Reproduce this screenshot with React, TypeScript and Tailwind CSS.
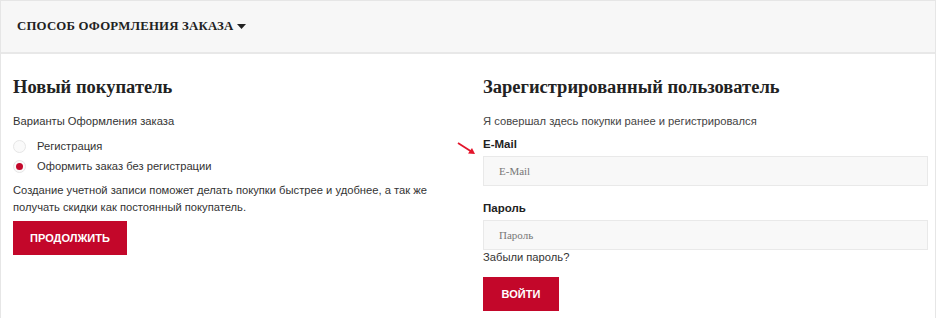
import React from 'react';

const serif = { fontFamily: '"Liberation Serif", "DejaVu Serif", serif' };

// Радио-кнопка
function Radio({ checked, label }: { checked?: boolean; label: string }) {
  return (
    <label className="flex items-center h-[20px] text-[11.2px] text-[#333]">
      <span className="w-[13px] h-[13px] rounded-full border border-[#e6e6e6] bg-[#fafafa] flex items-center justify-center">
        {checked && <span className="w-[7px] h-[7px] rounded-full bg-[#c3072a]" />}
      </span>
      <span className="ml-[11px]">{label}</span>
    </label>
  );
}

function Field({ label, placeholder }: { label: string; placeholder: string }) {
  return (
    <div>
      <div className="text-[11.5px] font-bold text-[#222] leading-[16px]">{label}</div>
      <div className="mt-[4px] h-[30px] border border-[#e9e9e9] bg-[#f8f8f8] flex items-center pl-[15px]">
        <span className="text-[11px] text-[#777]" style={serif}>{placeholder}</span>
      </div>
    </div>
  );
}

export default function App() {
  return (
    <div className="w-[937px] h-[318px] bg-white overflow-hidden" style={{ fontFamily: '"Liberation Sans", Arial, sans-serif' }}>
      <div className="w-[936px] h-[330px] border border-[#e6e6e6]">
        {/* Заголовок */}
        <div className="h-[53px] bg-[#f7f7f7] border-b-2 border-[#e8e8e8] flex items-center pl-[16px]">
          <span className="text-[12.8px] font-bold uppercase text-[#222] tracking-[0.2px]" style={serif}>
            Способ оформления заказа
          </span>
          <svg width="9" height="5" viewBox="0 0 9 5" className="ml-[4px]">
            <path d="M0 0h9L4.5 5z" fill="#222" />
          </svg>
        </div>

        <div className="grid grid-cols-[445px_445px] gap-[25px] pl-[12px] pt-[21px]">
          {/* Новый покупатель */}
          <div>
            <h2 className="text-[18.5px] font-bold text-[#222] leading-[24px]" style={serif}>Новый покупатель</h2>
            <p className="mt-[14px] text-[11.2px] text-[#333] leading-[16px]">Варианты Оформления заказа</p>
            <div className="mt-[7px]">
              <Radio label="Регистрация" />
              <Radio checked label="Оформить заказ без регистрации" />
            </div>
            <p className="mt-[6px] text-[11.2px] text-[#333] leading-[17px] pr-[10px]">
              Создание учетной записи поможет делать покупки быстрее и удобнее, а так же получать скидки как постоянный покупатель.
            </p>
            <button className="block mt-[5px] w-[114px] h-[34px] bg-[#c3072a] text-white text-[11px] font-bold uppercase">
              Продолжить
            </button>
          </div>

          {/* Зарегистрированный пользователь */}
          <div className="relative">
            <svg width="20" height="14" viewBox="0 0 20 14" className="absolute left-[-26px] top-[67px]">
              <path d="M1 1L15 10" stroke="#e3152b" strokeWidth="1.8" />
              <path d="M18 12L11 11.5L15 6z" fill="#e3152b" />
            </svg>
            <h2 className="text-[18.5px] font-bold text-[#222] leading-[24px]" style={serif}>Зарегистрированный пользователь</h2>
            <p className="mt-[14px] text-[11.2px] text-[#444] leading-[16px]">Я совершал здесь покупки ранее и регистрировался</p>
            <div className="mt-[7px]">
              <Field label="E-Mail" placeholder="E-Mail" />
            </div>
            <div className="mt-[14px]">
              <Field label="Пароль" placeholder="Пароль" />
            </div>
            <p className="mt-[-1px] text-[11.2px] text-[#333] leading-[16px]">Забыли пароль?</p>
            <button className="block mt-[12px] w-[76px] h-[34px] bg-[#c3072a] text-white text-[11px] font-bold uppercase">
              Войти
            </button>
          </div>
        </div>
      </div>
    </div>
  );
}
